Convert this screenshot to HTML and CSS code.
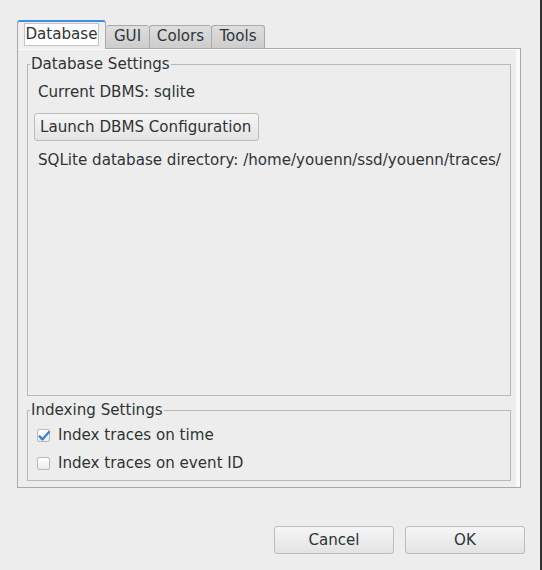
FILE: index.html
```html
<!DOCTYPE html>
<html>
<head>
<meta charset="utf-8">
<link rel="stylesheet" href="styles.css">
</head>
<body>
<div class="dialog">
  <div class="tabbar">
    <div class="tab tab-active"><span class="tab-focus">Database</span></div>
    <div class="tab tab-gui">GUI</div>
    <div class="tab tab-colors">Colors</div>
    <div class="tab tab-tools">Tools</div>
  </div>
  <div class="pane">
    <fieldset class="group group-db">
      <legend>Database Settings</legend>
      <div class="group-body">
        <div class="line">Current DBMS: sqlite</div>
        <button class="btn btn-launch">Launch DBMS Configuration</button>
        <div class="line line-dir">SQLite database directory: /home/youenn/ssd/youenn/traces/</div>
      </div>
    </fieldset>
    <fieldset class="group group-idx">
      <legend>Indexing Settings</legend>
      <div class="group-body idx-body">
        <div class="check-row">
          <span class="check checked">
            <svg width="14" height="14" viewBox="0 0 14 14"><path d="M2.6 7.4 L5.4 10.4 L12 3" fill="none" stroke="#3d7fd1" stroke-width="2.3" stroke-linecap="round" stroke-linejoin="round"/></svg>
          </span>
          <span>Index traces on time</span>
        </div>
        <div class="check-row">
          <span class="check"></span>
          <span>Index traces on event ID</span>
        </div>
      </div>
    </fieldset>
  </div>
  <div class="buttons">
    <button class="btn btn-dlg">Cancel</button>
    <button class="btn btn-dlg">OK</button>
  </div>
</div>
</body>
</html>
```
FILE: styles.css
```css
html, body {
  margin: 0;
  padding: 0;
  background: #ededed;
}
body {
  width: 542px;
  height: 570px;
  overflow: hidden;
  font-family: "DejaVu Sans", sans-serif;
  font-size: 15.1px;
  color: #2e3436;
}
.dialog {
  box-sizing: border-box;
  width: 542px;
  height: 570px;
  border-right: 2px solid #2e3436;
  padding: 20px 0 0 17px;
  display: flex;
  flex-direction: column;
}
.tabbar {
  display: flex;
  align-items: flex-end;
  height: 28px;
  position: relative;
  z-index: 1;
}
.tab {
  box-sizing: border-box;
  height: 23px;
  line-height: 21px;
  text-align: center;
  white-space: nowrap;
  border: 1px solid #a9a9a9;
  border-bottom: none;
  border-right: none;
  border-radius: 3px 3px 0 0;
  background: linear-gradient(#dedede, #cdcdcd);
}
.tab-active {
  height: 29px;
  width: 89px;
  margin-bottom: -1px;
  border-right: 1px solid #a9a9a9;
  border-top: 2px solid #3d8ee0;
  background: #efefef;
  padding: 1px 6px 0;
  display: flex;
  justify-content: center;
}
.tab-focus {
  box-sizing: border-box;
  display: block;
  width: 76px;
  height: 23px;
  line-height: 21px;
  background: #ffffff;
  border: 1px solid #c4c4c4;
}
.tab-gui { width: 43px; border-left: none; }
.tab-colors { width: 62px; }
.tab-tools { width: 54px; border-right: 1px solid #a9a9a9; }

.pane {
  box-sizing: border-box;
  width: 504px;
  height: 440px;
  border: 1px solid #a9a9a9;
  padding: 7px 9px 6px 9px;
  box-shadow: inset -4px 0 0 #fafafa, inset 0 1px 0 #fafafa;
  display: flex;
  flex-direction: column;
  gap: 6px;
}
.group {
  margin: 0;
  min-width: 0;
  border: 1px solid #b8b8b8;
  padding: 0 0 0 2px;
}
.group legend {
  padding: 0 1px;
  line-height: 17px;
}
.group-db {
  height: 340px;
  box-sizing: border-box;
}
.group-idx {
  height: 79px;
  box-sizing: border-box;
}
.group-body {
  padding: 10px 0 0 8px;
}
.line {
  line-height: 18px;
  white-space: nowrap;
}
.btn {
  box-sizing: border-box;
  height: 28px;
  font-family: "DejaVu Sans", sans-serif;
  font-size: 15.1px;
  color: #2e3436;
  white-space: nowrap;
  border: 1px solid #bcbcbc;
  border-radius: 3px;
  background: linear-gradient(#f6f6f6, #e3e3e3);
  padding: 0 5px;
  margin: 0;
}
.btn-launch {
  display: block;
  width: 225px;
  margin: 12px 0 10px -4px;
  text-align: left;
}
.idx-body {
  padding: 2px 0 0 7px;
}
.check-row {
  display: flex;
  align-items: center;
  gap: 8px;
  height: 28px;
  white-space: nowrap;
}
.check {
  box-sizing: border-box;
  width: 13px;
  height: 13px;
  border: 1px solid #b9b9b9;
  border-radius: 2px;
  background: linear-gradient(#ffffff, #ececec);
  position: relative;
}
.check svg {
  position: absolute;
  left: -1px;
  top: -1px;
}
.buttons {
  display: flex;
  justify-content: flex-end;
  gap: 11px;
  padding: 38px 15px 0 0;
}
.btn-dlg {
  width: 120px;
  text-align: center;
}
```
